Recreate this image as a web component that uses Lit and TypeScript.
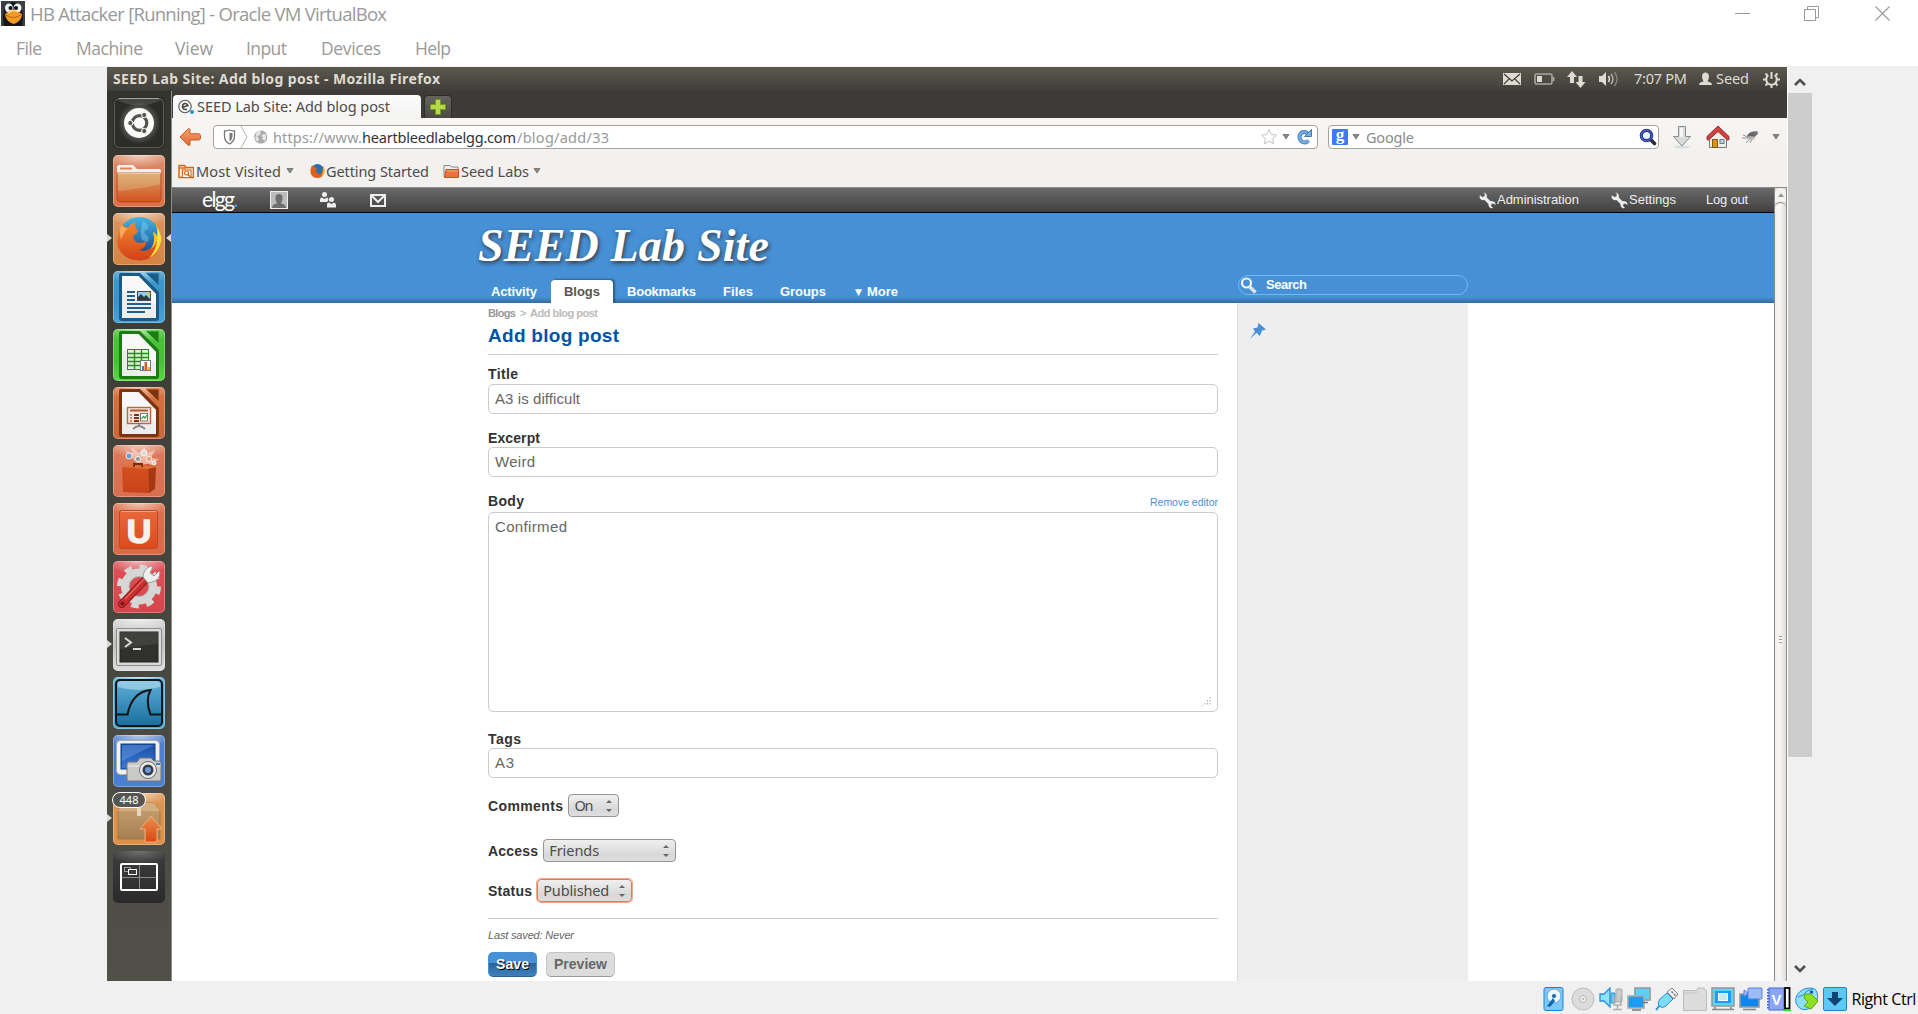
import { LitElement, html, svg, css } from "lit";
import { customElement, property } from "lit/decorators.js";

/** Text run whose tracking is computed so that it spans a given advance width. */
@customElement("fit-text")
class FitText extends LitElement {
  @property({ type: Number }) w = 0;
  static styles = css`
    :host { display: inline-block; justify-self: start; width: max-content; white-space: pre; }
  `;
  firstUpdated() {
    const n = (this.textContent || "").length;
    const natural = this.getBoundingClientRect().width;
    if (n > 1 && this.w) this.style.letterSpacing = ((this.w - natural) / (n - 1)).toFixed(3) + "px";
  }
  render() {
    return html`<slot></slot>`;
  }
}

const t = (text: string, w: number, cls = "") => html`<fit-text class=${cls} .w=${w}>${text}</fit-text>`;

const icon = (w: number, h: number, body: unknown) =>
  html`<svg width=${w} height=${h} viewBox="0 0 ${w} ${h}" fill="none">${body}</svg>`;

const grad = (id: string, a: string, b: string) => svg`
  <linearGradient id=${id} x1="0" y1="0" x2="0" y2="1"><stop offset="0" stop-color=${a}/><stop offset="1" stop-color=${b}/></linearGradient>`;

const tri = html`<svg class="tri" width="8" height="6" viewBox="0 0 8 6"><path d="M1 .5H7L4 5Z" fill="#8a8a88" stroke="#6a6a68" stroke-width=".8"/></svg>`;

/* ---------- launcher artwork, 52 x 52 ---------- */
const docPage = (dark: string, tile: string) => svg`
  <path d="M8 2H27L46 21V47Q46 50 43 50H9Q6 50 6 47V4Q6 2 8 2Z" fill=${dark}/>
  <path d="M33 2H46V15Z" fill=${dark} stroke=${tile}/>
  <path d="M9 5H25.500L43 23V47H9Z" fill="#ededed"/>
  <path d="M9 5H25.500L43 23V34L9 20Z" fill="#fff" opacity=".6"/>`;

const art: Record<string, unknown> = {
  dash: svg`
    <defs><radialGradient id="dg" cx=".5" cy=".5" r=".5"><stop offset=".55" stop-color="#fff" stop-opacity=".55"/><stop offset="1" stop-color="#fff" stop-opacity="0"/></radialGradient></defs>
    <rect x="1.500" y="1.500" width="49" height="49" rx="5" stroke="#6b6a65" opacity=".8"/>
    <path d="M6 1.500H46" stroke="#a8a7a2"/>
    <path d="M4 3Q26 14 48 3V2H4Z" fill="#fff" opacity=".12"/>
    <circle cx="26" cy="26" r="21" fill="url(#dg)" opacity=".5"/>
    <circle cx="26" cy="26" r="15" fill="#fbfbfb"/>
    <circle cx="26.500" cy="26" r="7.300" stroke="#55554f" stroke-width="3.200"/>
    <path d="M26.500 26L14 26M26.500 26L32 15.500M26.500 26L32 36.500" stroke="#fbfbfb" stroke-width="1.300"/>
    <g fill="#55554f" stroke="#fbfbfb" stroke-width="1"><circle cx="17.300" cy="26" r="2.600"/><circle cx="31.200" cy="18" r="2.600"/><circle cx="31.200" cy="34" r="2.600"/></g>`,
  files: svg`
    <defs>${grad("fg", "#d9a469", "#d3511f")}</defs>
    <path d="M4 12Q4 10 6 10H20L24 14H46Q48 14 48 16V24H4Z" fill="#f4efec"/>
    <path d="M7 12.500H19V14.500H7Z" fill="#e8834f"/>
    <path d="M4 18H48V44Q48 47 45 47H7Q4 47 4 44Z" fill="url(#fg)" stroke="#b5451b" stroke-width=".8"/>
    <path d="M5 19H47V29Q28 34 5 36Z" fill="#e9cfa0" opacity=".3"/>
    <path d="M4.500 18.500H47.500" stroke="#f3c49a"/>`,
  firefox: svg`
    <defs>${grad("ffb", "#43b5e3", "#123b86")}${grad("ffo", "#f5892c", "#d2401a")}</defs>
    <circle cx="26.500" cy="25" r="21" fill="url(#ffb)"/>
    <path d="M30 8q6 3 5 8q-5 1-3 5q5 2 3 8l-6-2q-3-8 1-19Z" fill="#7fd0ee" opacity=".45"/>
    <path d="M43 12Q50 22 47 32Q43 46 28 47.500Q11 48 5 34Q3 25 7 17L8 10Q11 14 15 15Q18 10 23 9Q20 13 25 17Q25 20 20 23Q21 29 26 30Q32 30 33 27Q34 35 26 37Q35 40 40 32Q43 25 40 19Q43 20 44 24Q45 17 43 12Z" fill="url(#ffo)"/>
    <path d="M43 12Q50 22 47 32Q44 41 36 45Q45 35 44 24Q45 17 43 12ZM46 18Q50 25 47 32Q49 24 46 18Z" fill="#f9e03a"/>
    <path d="M40 19Q43 28 38 36Q45 30 44 24Q43 20 40 19Z" fill="#fbc22c"/>
    <path d="M8 11Q10 16 15 15Q10 20 8 27Q6 19 8 11Z" fill="#fba858"/>`,
  writer: svg`${docPage("#1b5a86", "#3f98cb")}
    <path d="M14 21H22M14 25H22M14 29H22M14 33H38M14 37H38M14 41H32" stroke="#1f5f8c" stroke-width="2"/>
    <rect x="24.500" y="20.500" width="13" height="9" fill="#8fd0ee" stroke="#3f4b52"/>
    <path d="M25 29V26L28 23L31 26L33 24L37 28V29Z" fill="#303a40"/><circle cx="35.500" cy="22.500" r="1.500" fill="#f3c42e"/>`,
  calc: svg`${docPage("#1d7a14", "#4cc43a")}
    <rect x="14.500" y="20.500" width="21" height="20" fill="#dff3da" stroke="#2a8a20"/>
    <path d="M21.500 20V40M28.500 20V40M14 24.500H36M14 28.500H36M14 32.500H36M14 36.500H36" stroke="#2a8a20" stroke-width="1.400"/>
    <rect x="27.500" y="31.500" width="10" height="10" fill="#fff" stroke="#777"/>
    <path d="M29 41V37H31V41Z" fill="#3d7fc0"/><path d="M31.500 41V33H34V41Z" fill="#e2562a"/><path d="M34.500 41V38H37V41Z" fill="#f0b429"/>`,
  impress: svg`${docPage("#7c3310", "#d5733f")}
    <rect x="14.500" y="20.500" width="23" height="16" fill="#f6e8e0" stroke="#c0663c" stroke-width="1.400"/>
    <path d="M17 23.500H35" stroke="#b65a2e" stroke-width="2"/>
    <path d="M17 28H19M17 31H19M17 34H19" stroke="#d98b63" stroke-width="1.800"/><path d="M21 28H26M21 31H26M21 34H26" stroke="#7c3310" stroke-width="1.800"/>
    <rect x="27.500" y="26.500" width="7" height="7.500" fill="#fff" stroke="#777"/><path d="M28.500 32L30.500 29.500L32 31L34 28" stroke="#2b9b28" stroke-width="1.200"/>
    <path d="M26 37V39M20 42Q26 36 32 42" stroke="#888" stroke-width="1.800"/>`,
  center: svg`
    <defs>${grad("bg1", "#d5521f", "#c9431a")}</defs>
    <path d="M26 20L12 6L20 8L18 2L26 8L32 2L32 9L42 5L38 13L46 14L38 20Z" fill="#fff" opacity=".45"/>
    <g stroke="#fff" stroke-width=".8"><circle cx="16" cy="11" r="3" fill="#6c9bc7"/><circle cx="31" cy="8" r="3" fill="#ded9d5"/><circle cx="25" cy="14" r="2.600" fill="#8d9a9d"/><circle cx="36" cy="14" r="2.800" fill="#e9a080"/><circle cx="41" cy="18" r="2" fill="#c9d5da"/></g>
    <path d="M9 22L35 19L36 48L10 47Z" fill="url(#bg1)"/>
    <path d="M35 19L43 22L42 44L36 48Z" fill="#a8380f"/>
    <path d="M9 22L12 20L43 20.500V22L35 24Z" fill="#e0713a"/>
    <path d="M21 22V19H29V22" stroke="#7b2a0b" stroke-width="1.800"/>`,
  one: svg`
    <defs>${grad("og", "#e8673c", "#de4a1c")}</defs>
    <rect x="6.500" y="7.500" width="38" height="38" rx="2" fill="url(#og)" stroke="#b94a2a"/>
    <path d="M8 8.500H43" stroke="#f2a384"/>
    <text x="26" y="40" text-anchor="middle" class="u-one">U</text>`,
  settings: svg`
    <g transform="translate(26 25.500)"><circle r="14" stroke="#d6d6d4" stroke-width="8"/>
    <circle r="19.500" stroke="#d6d6d4" stroke-width="5" stroke-dasharray="7.650 7.660"/>
    <circle r="10" stroke="#b5b5b5" stroke-width="1"/></g>
    <path d="M9 43L33 18" stroke="#8f1b1b" stroke-width="8" stroke-linecap="round"/>
    <path d="M9 43L33 18" stroke="#c92f2f" stroke-width="6" stroke-linecap="round"/>
    <path d="M12 38L32 17" stroke="#e46a66" stroke-width="1.300"/>
    <circle cx="9.500" cy="42.500" r="2" fill="#7c1717"/>
    <path d="M30 16Q30 8 38 5L40 6L37 12L41 15L46 10L47 11Q47 19 39 21L35 22Z" fill="#eeeeec" stroke="#9a9a9a"/>`,
  terminal: svg`
    <rect x="3.500" y="9.500" width="45" height="37" rx="1.500" fill="#d9dbd8" stroke="#8b8d8a"/>
    <rect x="7" y="13" width="38" height="30" fill="#30302e" stroke="#222"/>
    <path d="M7 13H45V25Q24 27 7 30Z" fill="#5a5a58" opacity=".4"/>
    <path d="M12 19L18 23.500L12 28M20 30H28" stroke="#d8d8d6" stroke-width="2"/>`,
  shark: svg`
    <defs>${grad("sg", "#5fb0d6", "#186f9e")}</defs>
    <rect x="3" y="3" width="46" height="46" rx="4" fill="url(#sg)" stroke="#0f1416" stroke-width="2"/>
    <path d="M5 10Q4 4 8 4H44Q48 4 47 10Q26 16 5 10Z" fill="#d4f0fa" opacity=".45"/>
    <path d="M4 37.500H14.500Q19 15 37.500 13Q32 23 37.500 37.500H48" stroke="#0f1416" stroke-width="2"/>`,
  shot: svg`
    <defs>${grad("mg", "#1c4fa8", "#3a7bd5")}</defs>
    <rect x="3.500" y="5.500" width="43" height="34" rx="4" fill="#f1f1ef" stroke="#a9abad"/>
    <rect x="8" y="9" width="34" height="25" fill="url(#mg)" stroke="#0c3c86"/>
    <path d="M9 10H41L9 26Z" fill="#80b4f0" opacity=".35"/>
    <path d="M14 29Q14 27 16 27H24L27 23H38L41 26H46Q48 26 48 28V46H14Z" fill="#c9cac8" stroke="#777"/>
    <path d="M14.500 31H47.500" stroke="#eee"/>
    <circle cx="35" cy="35" r="8.500" fill="#e9e9e7" stroke="#6a6a6a"/><circle cx="35" cy="35" r="5.500" fill="#333b46"/><circle cx="35" cy="35" r="3" fill="#6d99d8"/>
    <rect x="43" y="28" width="4" height="2" fill="#3a7bd5"/>`,
  updater: svg`
    <defs>${grad("ug", "#c9a272", "#a57f52")}${grad("ua", "#e9914f", "#d9480f")}</defs>
    <path d="M5 18L11 10H41L47 18V46H5Z" fill="url(#ug)" stroke="#9a7547" stroke-width=".8"/>
    <path d="M5 18L11 10H41L47 18Z" fill="#d2ae80"/>
    <path d="M24 10H28V23H24Z" fill="#e7d6bf"/>
    <path d="M38 23L49 36H44V49H32V36H27Z" fill="url(#ua)" stroke="#f0b385"/>`,
  workspace: svg`
    <path d="M26.500 13V39M8 26.500H45" stroke="#8b8b8b"/>
    <rect x="8" y="13" width="36" height="26" rx="1" stroke="#fff" stroke-width="2"/>
    <rect x="11.500" y="16.500" width="6" height="4" stroke="#999"/><rect x="15.500" y="18.500" width="8" height="5" fill="#3a3a3a" stroke="#fff"/>`,
};

const launchers = ["dash", "files", "firefox", "writer", "calc", "impress", "center", "one", "settings", "terminal", "shark", "shot", "updater", "workspace"];
const running = ["firefox", "terminal", "updater"];

@customElement("unity-launcher")
class UnityLauncher extends LitElement {
  static styles = css`
    :host { display: flex; flex-direction: column; gap: 6px; width: 64px; box-sizing: border-box; padding: 6px 0 0 6px; background: linear-gradient(#34342f, #45453e 50%, #504f48); }
    .tile { position: relative; width: 52px; height: 52px; border-radius: 5px; box-shadow: inset 0 0 0 1px rgba(255,255,255,.28); }
    .tile::before { content: ""; position: absolute; inset: 0; border-radius: 5px; background: radial-gradient(ellipse 34px 13px at 50% 0, rgba(255,255,255,.6), rgba(255,255,255,0)); }
    .tile svg { display: block; position: relative; }
    .dash { background: #2c2c28; box-shadow: none; }
    .dash::before { display: none; }
    .files { background: linear-gradient(#db8a68, #dc7246); }
    .firefox { background: linear-gradient(#d9955f, #d58342); }
    .writer { background: linear-gradient(#3f98cb, #3a93c8 60%, #47a2d8); }
    .calc { background: linear-gradient(#4cc43a, #46c034 60%, #58d845); }
    .impress { background: linear-gradient(#d5733f, #c9673a); }
    .center { background: linear-gradient(#dd7a5b, #d86e4d); }
    .one { background: linear-gradient(#dc6f4a, #d86b45); }
    .settings { background: linear-gradient(#de5057, #d5474d); }
    .terminal { background: linear-gradient(#d4d4d4, #bdbdbd 50%, #dedede); }
    .shark { background: #49ade0; }
    .shot { background: linear-gradient(#4e80cc, #4a7fd2); }
    .updater { background: linear-gradient(#dc944f, #de9146); }
    .workspace { background: linear-gradient(#3c3c3c, #343434 50%, #2a2a2a); box-shadow: none; }
    .workspace::before { opacity: .45; }
    .u-one { font: bold 34px "Liberation Sans", sans-serif; fill: #f6f1ee; stroke: #f6f1ee; stroke-width: 1.500; }
    .run { position: absolute; left: -6px; top: 21px; width: 0; height: 0; border: 4.500px solid transparent; border-left: 5px solid #d8d8d6; border-right: 0; }
    .focus { position: absolute; right: -6px; top: 21px; width: 0; height: 0; border: 4.500px solid transparent; border-right: 5px solid #d8d8d6; border-left: 0; }
    .badge { position: absolute; left: -1px; top: -1px; width: 34px; height: 16px; box-sizing: border-box; border: 1.500px solid #fff; border-radius: 8px; background: #555; color: #fff; font: 11px/13px "Noto Sans", sans-serif; text-align: center; }
  `;
  render() {
    return launchers.map(
      (n) => html`<div class="tile ${n}">
        ${icon(52, 52, art[n])}
        ${running.includes(n) ? html`<i class="run"></i>` : ""}
        ${n === "firefox" ? html`<i class="focus"></i>` : ""}
        ${n === "updater" ? html`<b class="badge">448</b>` : ""}
      </div>`
    );
  }
}

/* ---------- small icons ---------- */
const wrench = icon(17, 17, svg`<path d="M4.500 .5L5.800 1.800L5.500 4.500L3 5L.8 3Q0 6 2 7.500Q3.500 8.500 5.500 8L9.500 12Q9 14.500 11 15.700Q12.500 16.700 14 15.700L12 14L12.500 12L14.500 11.600L16.300 13.300Q17 10.500 14.500 9.500Q13 8.800 11.500 9.300L7.800 5.600Q8.500 2.500 6.500 1.200Q5.500 .4 4.500 .5Z" fill="#eee"/>`);
const firefoxSmall = icon(16, 16, svg`<circle cx="7.500" cy="7.500" r="6.500" fill="#2a6fb4"/><path d="M13 3Q15.500 7 14 11Q12 15 7.500 15Q2 15 .5 10Q0 6 2 2Q3 4 5 4L7 6.500L5.500 8Q6 10.500 9 10Q9 12 7 12Q12 12 12.500 7Z" fill="#e3601c"/><path d="M13 3Q15.500 7 14 11Q13 13 11 14Q14 10 13 3Z" fill="#f7c531"/>`);
const folderSmall = icon(16, 16, svg`<path d="M1 2.500H7L8.500 4H15V14H1Z" fill="#eee" stroke="#888"/><path d="M1.500 14.500L3 6.500H15.500V14.500Z" fill="#e5753a" stroke="#c65216"/><path d="M4 8H15" stroke="#f1aa80"/>`);
const mostIcon = icon(16, 16, svg`<path d="M1 2.500H6.500L8 4.500H15.500V14.500H1Z" fill="#fbe3cd" stroke="#d8640f" stroke-width="1.400"/><path d="M1 5H8" stroke="#d8640f" stroke-width="1.400"/><rect x="4.500" y="7" width="8.500" height="7.500" fill="#fff" stroke="#d8640f"/><circle cx="8.500" cy="10" r="2" stroke="#d8640f" stroke-width="1.200"/><path d="M10 11.500L12.500 14" stroke="#d8640f" stroke-width="1.400"/>`);

/* ---------- Firefox chrome ---------- */
@customElement("browser-chrome")
class BrowserChrome extends LitElement {
  static styles = css`
    :host { display: block; font: 14.500px "Noto Sans", sans-serif; color: #4c4c4c; }
    svg { display: block; }
    fit-text { line-height: 20px; }
    .tabs { display: flex; align-items: flex-end; gap: 3px; height: 27px; padding-left: 1px; background: #3c3b37; box-sizing: border-box; }
    .tab { display: grid; grid-template-columns: 19px 1fr; align-items: center; width: 248px; height: 23px; padding-left: 5px; box-sizing: border-box; border-radius: 4px 4px 0 0; background: linear-gradient(#fbfbfb, #f5f4f3); }
    .tab fit-text { margin-top: -2px; }
    .plus { display: grid; place-items: center; width: 28px; height: 23px; border-radius: 4px 4px 0 0; background: linear-gradient(#64635d, #4b4a45); border: 1px solid #2e2d2a; border-bottom: 0; box-sizing: border-box; }
    .nav { display: grid; grid-template-columns: 34px 1105px 10px 331px 13px 34px 35px 31px 1fr; align-items: center; height: 38px; padding-left: 7px; box-sizing: border-box; background: linear-gradient(#f7f6f5, #f2f1f0); }
    .field { display: grid; align-items: center; height: 24px; border: 1px solid #a5a29d; border-radius: 4px; background: #fff; box-sizing: border-box; }
    .url { grid-template-columns: 18px 14px 19px 89px 155px 743px 22px 14px 1fr; padding-left: 8px; color: #9a9a9a; }
    .url .host { color: #333; }
    .find { grid-template-columns: 20px 14px 273px 1fr; padding-left: 3px; color: #8a8a8a; }
    .marks { display: grid; grid-template-columns: 18px 90px 24px 16px 117px 18px 72px 1fr; align-items: center; height: 32px; padding: 0 0 2px 6px; background: #f2f1ef; border-bottom: 1px solid #8d8b87; box-sizing: border-box; }
    .g { font: bold 17px "Liberation Serif", serif; fill: #fff; }
  `;
  render() {
    return html`
      <div class="tabs">
        <div class="tab">
          ${icon(16, 16, svg`<circle cx="7" cy="7.500" r="6.200" stroke="#555" stroke-width="1.100"/><path d="M4 8.500L10 6.500Q9 4 6.500 4.500Q4 5.500 4.500 8.500Q5.500 11 9 10.500" stroke="#444" stroke-width="1.500"/><circle cx="14" cy="13" r="2" fill="#1b98c9"/>`)}
          ${t("SEED Lab Site: Add blog post", 193)}
        </div>
        <div class="plus">${icon(16, 16, svg`<path d="M5.500 .5H10.500V5.500H15.500V10.500H10.500V15.500H5.500V10.500H.5V5.500H5.500Z" fill="#b5d84e" stroke="#6f9a1c"/>`)}</div>
      </div>
      <div class="nav">
        ${icon(23, 20, svg`<defs>${grad("ba", "#f7a271", "#e0682f")}</defs><path d="M9.500 1.500Q11 1.500 11 3V6.800H19.500Q21.500 6.800 21.500 8.800V11Q21.500 13 19.500 13H11V17Q11 19 9.500 18.500L1 10Z" fill="url(#ba)" stroke="#c95a25"/>`)}
        <div class="field url">
          ${icon(16, 18, svg`<path d="M7.500 2Q10 3 12.500 3V8Q12.500 13.500 7.500 16Q2.500 13.500 2.500 8V3Q5 3 7.500 2Z" stroke="#777" stroke-width="1.300"/><path d="M7.500 4.500Q9 5 10.500 5V8.500Q10 12 7.500 13.500Z" fill="#777"/>`)}
          ${icon(8, 22, svg`<path d="M1 0L7 11L1 22" stroke="#b8b6b2"/>`)}
          ${icon(14, 16, svg`<circle cx="6.800" cy="8" r="6.600" fill="#a9a9a9"/><path d="M2.500 3Q5 1 7 3L6 6L3 7L5 10L4 13Q0 10 2 6ZM9 5L12 5Q13 9 11 12L8 10L9 8L7 7Z" fill="#e4e4e4"/>`)}
          ${t("https://www.", 89)}${t("heartbleedlabelgg.com", 154, "host")}${t("/blog/add/33", 92)}
          ${icon(18, 18, svg`<path d="M9 1.500L11.300 6.500L16.500 7.100L12.600 10.700L13.700 16L9 13.300L4.300 16L5.400 10.700L1.500 7.100L6.700 6.500Z" stroke="#c4c4c4" fill="#fff"/>`)}
          ${tri}
          ${icon(17, 18, svg`<path d="M12.500 12.500Q10 15.500 6.500 14Q3 12 3.500 8Q5 3.500 9 4Q11 4.500 12 6" stroke="#4a85bd" stroke-width="4"/><path d="M12.500 12.500Q10 15.500 6.500 14Q3 12 3.500 8Q5 3.500 9 4Q11 4.500 12 6" stroke="#79aede" stroke-width="2"/><path d="M15.500 1.500V8.500H8.500Z" fill="#79aede" stroke="#3f7ab3"/>`)}
        </div>
        <span></span>
        <div class="field find">
          ${icon(16, 16, svg`<rect width="16" height="16" rx="1" fill="#4079f5"/><text x="8" y="11" text-anchor="middle" class="g">g</text>`)}
          ${tri}<span>${t("Google", 48)}</span>
          ${icon(18, 18, svg`<path d="M11.500 11.500L15.500 15.500" stroke="#2c2c34" stroke-width="3.600" stroke-linecap="round"/><circle cx="7.500" cy="7.500" r="5.200" fill="#eaf1fb" stroke="#25358a" stroke-width="3.200"/><circle cx="7.500" cy="7.500" r="5.300" stroke="#5a70c8" stroke-width="1"/>`)}
        </div>
        <span></span>
        ${icon(20, 24, svg`<ellipse cx="10" cy="22" rx="8" ry="1.500" fill="#ddd"/><path d="M6.500 1.500H13.500V11.500H18.500L10 21L1.500 11.500H6.500Z" fill="#d9dcdd" stroke="#8b8e8c"/><path d="M8 3H11V12H8Z" fill="#f6f7f7"/>`)}
        ${icon(24, 24, svg`<path d="M3.500 11V22.500H20.500V11L12 3.500Z" fill="#efefe9" stroke="#777"/><rect x="6.500" y="14.500" width="5" height="8" fill="#d8921f" stroke="#8a5a0b"/><rect x="14" y="14.500" width="4" height="4" fill="#b9d9ee" stroke="#6a7d89"/><path d="M12 1L23 11.500V14.500L21.500 15L12 6.500L2.500 15L1 14.500V11.500Z" fill="#cf4340" stroke="#a02a2a"/>`)}
        ${icon(18, 16, svg`<path d="M2 6L7 8M1 9L7 9M5 14L9 10M9 14L11 10" stroke="#888" stroke-width=".9"/><ellipse cx="11" cy="6" rx="5" ry="3" transform="rotate(-25 11 6)" fill="#666"/><ellipse cx="10" cy="9" rx="4" ry="2" fill="#bbb" opacity=".8"/><circle cx="15" cy="4" r="2" fill="#777"/>`)}
        ${tri}
      </div>
      <div class="marks">
        ${mostIcon}${t("Most Visited", 85)}${tri}${firefoxSmall}${t("Getting Started", 103)}${folderSmall}${t("Seed Labs", 68)}${tri}
      </div>
    `;
  }
}

/* ---------- the page ---------- */
@customElement("elgg-page")
class ElggPage extends LitElement {
  static styles = css`
    :host { display: flex; flex-direction: column; background: #fff; font: 13px "Liberation Sans", sans-serif; overflow: hidden; }
    svg { display: block; }
    .top { display: grid; grid-template-columns: 68px 50px 50px 1109px 18px 114px 18px 77px 1fr; align-items: center; flex: none; height: 25px; padding-left: 30px; box-sizing: border-box; background: linear-gradient(#6a6a6a, #404040); border-bottom: 1px solid #000; color: #eee; }
    .top fit-text { margin-top: -2px; }
    .elgg { font: 21px/22px Lato, sans-serif; color: #fff; display: flex; }
    .elgg .dot { color: #2aa3dc; margin-top: -2px; }
    .head { flex: none; height: 90px; padding-left: 306px; background: linear-gradient(#4690d6 84px, #3a78b4 88px, #33689e); box-sizing: border-box; color: #fff; }
    h1 { margin: 0; height: 62px; font: italic bold 46px/66px "Liberation Serif", serif; text-shadow: 1px 2px 4px #333; }
    .nav { display: grid; grid-template-columns: 73px 62px 14px 96px 57px 75px 12px 371px 230px; align-items: end; height: 28px; font-weight: bold; }
    .nav > fit-text { line-height: 22px; }
    .nav > .first { margin-left: 13px; }
    .sel { width: 62px; height: 23px; box-sizing: border-box; padding-left: 13px; line-height: 24px; background: #fff; color: #555; border-radius: 4px 4px 0 0; box-shadow: 2px -1px 2px rgba(0,0,0,.35); clip-path: inset(-4px -4px 0 -4px); }
    .search { align-self: start; display: grid; grid-template-columns: 25px 1fr; align-items: center; height: 20px; box-sizing: border-box; border: 1px solid #71b9f7; border-radius: 10px; padding-left: 2px; }
    .search fit-text { margin-top: -2px; }
    .arrow { font: 9px/21px "DejaVu Sans", sans-serif; }
    .main { display: grid; grid-template-columns: 730px 231px; column-gap: 19px; padding-left: 316px; flex: 1; min-height: 0; }
    aside { background: #eee; border-left: 1px solid #dcdcdc; box-sizing: border-box; padding: 20px 0 0 12px; }
    .crumb { display: grid; grid-template-columns: 32px 10px 1fr; height: 20px; line-height: 20px; font-size: 11px; font-weight: bold; color: #bbb; }
    .crumb .on { color: #999; }
    h2 { margin: 0 0 10px; height: 32px; box-sizing: border-box; border-bottom: 1px solid #ccc; font: bold 19px/25px "Liberation Sans", sans-serif; color: #0054a7; }
    .label { display: flex; justify-content: space-between; height: 19px; line-height: 19px; font-size: 14px; font-weight: bold; color: #333; }
    .low { line-height: 21px; }
    .tall { height: 20px; }
    .remove { font-size: 10.500px; font-weight: normal; color: #4690d6; line-height: 21px; }
    .box { height: 30px; box-sizing: border-box; border: 1px solid #ccc; border-radius: 5px; padding-left: 6px; font-size: 15px; line-height: 28px; color: #666; }
    .gap14 { margin-bottom: 14px; }
    .gap15 { margin-bottom: 15px; }
    .gap16 { margin-bottom: 16px; }
    .area { height: 200px; display: flex; justify-content: space-between; margin-bottom: 17px; }
    .area svg { align-self: flex-end; margin: 0 6px 5px 0; }
    .line { display: flex; align-items: center; gap: 5px; height: 23px; font-size: 14px; font-weight: bold; color: #333; }
    .select { display: flex; justify-content: space-between; align-items: center; height: 23px; box-sizing: border-box; border: 1px solid #979591; border-radius: 4px; padding: 0 5px; font: 14.500px/20px "Noto Sans", sans-serif; color: #4c4c4c; background: linear-gradient(#f0f0f0, #d8d8d8 70%, #dedede); }
    .select fit-text { margin-top: -1px; }
    .w51 { width: 51px; } .w133 { width: 133px; } .w95 { width: 95px; }
    .focus { border-color: #df7b59; box-shadow: 0 0 0 1px #f2a88c; }
    .c1 { margin-bottom: 22px; } .c2 { margin-bottom: 17px; }
    .foot { margin-top: 16px; border-top: 1px solid #ccc; }
    .saved { height: 33px; line-height: 33px; font-size: 11px; font-style: italic; color: #666; }
    .btns { display: flex; gap: 9px; }
    .btn { height: 25px; box-sizing: border-box; border-radius: 5px; text-align: center; font: bold 14px/23px "Liberation Sans", sans-serif; }
    .save { width: 49px; color: #fff; border: 1px solid #4690d6; border-bottom-color: #2d5f92; background: linear-gradient(#4690d6 10px, #2f6396 10px, #3d80bf); text-shadow: 1px 1px 0 #000; }
    .preview { width: 69px; color: #666; border: 1px solid #c4c4c4; border-bottom-color: #999; background: #dcdcdc; }
  `;
  render() {
    const spin = html`<svg width="8" height="14" viewBox="0 0 8 14"><path d="M1 4L4 1L7 4ZM1 10L4 13L7 10Z" fill="#666"/></svg>`;
    const envelope = icon(16, 13, svg`<rect x="1" y="1" width="14" height="11" stroke="#eee" stroke-width="2"/><path d="M2 2L8 8L14 2" stroke="#eee" stroke-width="2"/>`);
    return html`
      <div class="top">
        <span class="elgg">${t("elgg", 33)}<span class="dot">.</span></span>
        ${icon(18, 18, svg`<rect x=".5" y=".5" width="17" height="17" fill="#bcbcbc" stroke="#eee"/><path d="M2 17Q2 13 7 12.500Q5 9 5.500 6Q6 3 9 3Q12 3 12.500 6Q13 9 11 12.500Q16 13 16 17Z" fill="#6e6e6e"/>`)}
        ${icon(16, 16, svg`<g fill="#eee"><circle cx="4.500" cy="2.500" r="2.500"/><path d="M0 10V7.500Q0 5.500 2 5.500L4.500 7L7 5.500Q8.500 6 8.500 8L7 10Z"/><circle cx="11.500" cy="7.500" r="2.500"/><path d="M7 15.500V12.500Q7 10.500 9 10.500L11.500 12L14 10.500Q16 11 16 13V15.500Z"/></g>`)}
        ${envelope}
        ${wrench}${t("Administration", 82)}${wrench}${t("Settings", 47)}${t("Log out", 42)}
      </div>
      <div class="head">
        <h1>${t("SEED Lab Site", 291)}</h1>
        <div class="nav">
          ${t("Activity", 46, "first")}
          <div class="sel">${t("Blogs", 36)}</div><span></span>
          ${t("Bookmarks", 69)}${t("Files", 30)}${t("Groups", 46)}
          <span class="arrow">▼</span>${t("More", 31)}
          <div class="search">
            ${icon(17, 17, svg`<circle cx="5.500" cy="6" r="4.500" stroke="#f4f4f4" stroke-width="2.200"/><path d="M8.500 9.500L14.500 15.500" stroke="#e2e2e2" stroke-width="3.600"/>`)}
            ${t("Search", 41)}
          </div>
        </div>
      </div>
      <div class="main">
        <section>
          <div class="crumb">${t("Blogs", 28, "on")}<span>&gt;</span>${t("Add blog post", 68)}</div>
          <h2>${t("Add blog post", 131)}</h2>
          <div class="label">${t("Title", 30)}</div>
          <div class="box gap14">${t("A3 is difficult", 85)}</div>
          <div class="label low">${t("Excerpt", 52)}</div>
          <div class="box gap15">${t("Weird", 40)}</div>
          <div class="label tall">${t("Body", 36)}<span class="remove">${t("Remove editor", 68)}</span></div>
          <div class="box area">${t("Confirmed", 72)}
            ${icon(10, 10, svg`<path d="M9 1V10M6.500 4V10M4 7V10M1 9V10" stroke="#aaa" stroke-dasharray="1.500 1.500"/>`)}
          </div>
          <div class="label low">${t("Tags", 33)}</div>
          <div class="box gap16">${t("A3", 19)}</div>
          <div class="line c1">${t("Comments", 75)}<div class="select w51">${t("On", 19)}${spin}</div></div>
          <div class="line c2">${t("Access", 50)}<div class="select w133">${t("Friends", 50)}${spin}</div></div>
          <div class="line">${t("Status", 44)}<div class="select w95 focus">${t("Published", 66)}${spin}</div></div>
          <div class="foot">
            <div class="saved">${t("Last saved: Never", 86)}</div>
            <div class="btns"><div class="btn save">${t("Save", 33)}</div><div class="btn preview">${t("Preview", 53)}</div></div>
          </div>
        </section>
        <aside>${icon(16, 16, svg`<path d="M8.500 0L16 6.500L14 7L12 7.500L9.800 13L6.500 9.800L0 16L5 8.500L3 5.500L7.500 4.500Z" fill="#4690d6"/>`)}</aside>
      </div>
    `;
  }
}

const trayIcons = [
  svg`<rect x="1" y=".5" width="19" height="23" rx="2" fill="#7cc8fa" stroke="#1f83c9"/><circle cx="11" cy="9" r="7" fill="#eaf7ff" stroke="#5aa9e0"/><circle cx="11" cy="9" r="2" fill="#1467a8"/><path d="M4 19L10 11L12 14L7 20Z" fill="#1467a8"/>`,
  svg`<circle cx="12" cy="12" r="11" fill="#dcdcdc" stroke="#bdbdbd"/><circle cx="12" cy="12" r="3.500" fill="#eee" stroke="#b5b5b5"/><circle cx="12" cy="12" r="1" fill="#aaa"/>`,
  svg`<path d="M1 7H5L11 1V20L5 14H1Z" fill="#8fe0fa" stroke="#2c8fd6" stroke-width="1.300"/><path d="M12 6H16V16H12Z" fill="#66c8f4" stroke="#2c8fd6"/><rect x="17" y="2" width="6" height="13" rx="1" fill="#ccc" stroke="#aaa"/><path d="M15 10V18H22V10M18.500 18V22M14 22.500H23" stroke="#b0b0b0" stroke-width="1.600"/>`,
  svg`<rect x="8" y="1" width="15" height="12" fill="#5ad0fb" stroke="#999" stroke-width="1.600"/><rect x="1" y="9" width="16" height="12" fill="#1c9cf2" stroke="#aaa" stroke-width="1.600"/><path d="M5 23H14M16 15.500H21" stroke="#777" stroke-width="1.500"/>`,
  svg`<path d="M1 23L5 18" stroke="#2c8fd6" stroke-width="2"/><path d="M4 19Q2 16 5 12L12 6L18 12L11 19Q7 22 4 19Z" fill="#7fdcf8" stroke="#2c8fd6"/><path d="M12 5L17 1L23 7L19 12Z" fill="#eee" stroke="#888"/><path d="M16.500 4.500L18 6M19 7L20.500 8.500" stroke="#777" stroke-width="1.600"/>`,
  svg`<path d="M.5 3.500H13L15 1H21L23.500 4V23.500H.5Z" fill="#dcdcdc" stroke="#bbb"/><path d="M.5 6H13L15 4" stroke="#c4c4c4"/>`,
  svg`<rect x="1" y="1" width="22" height="18" fill="#5cd3fb" stroke="#999" stroke-width="1.600"/><rect x="4" y="4" width="16" height="12" fill="#1c9cf2"/><rect x="7.500" y="6.500" width="9" height="7" fill="#bdeeff" stroke="#fff"/><path d="M1 22.500H23M4 20V22M20 20V22" stroke="#888" stroke-width="1.600"/>`,
  svg`<rect x="1" y="7" width="19" height="13" fill="#0d86ee" stroke="#999" stroke-width="1.600"/><path d="M4 22.500H17" stroke="#888" stroke-width="1.600"/><rect x="9" y="1" width="14" height="11" rx="1" fill="#9cbcf8" stroke="#5b7fe0"/><path d="M9 6L5 3V10Z" fill="#9cbcf8" stroke="#5b7fe0"/>`,
  svg`<rect x="2" y="1" width="15" height="22" fill="#8da6f2" stroke="#4a66cf"/><path d="M1 2V23M18 2V23" stroke="#4a66cf" stroke-width="2" stroke-dasharray="1.500 1.500"/><text x="9.500" y="18" text-anchor="middle" class="v">V</text><rect x="18" y="1" width="4.500" height="20.500" fill="#fff" stroke="#000" stroke-width="1.800"/><path d="M17 23.500H24" stroke="#1bea1b" stroke-width="1.500"/>`,
  svg`<path d="M1 16Q-1 7 9 2Q20 -1 22 5Q25 15 16 21Q5 26 1 16Z" fill="#8fdcfb" stroke="#2c8fd6"/><path d="M3 10Q9 9 12 4M12 4L18 2" stroke="#2c8fd6"/><circle cx="16.500" cy="5" r="1.600" fill="#114a80"/><path d="M10 7H16L23 14L16 22L9 19L13 15L9 11Z" fill="#8fe01f" stroke="#57a80f"/>`,
  svg`<rect x=".5" y=".5" width="23" height="23" rx="1.500" fill="#5cc8f8" stroke="#1f83c9"/><path d="M9 5H15V11H20L12 19L4 11H9Z" fill="#0f4473"/>`,
];

@customElement("app-root")
class AppRoot extends LitElement {
  static styles = css`
    :host { display: flex; flex-direction: column; width: 1918px; height: 1014px; overflow: hidden; background: #f0f0f0; font-family: "Open Sans", sans-serif; color: #999; }
    svg { display: block; }
    .win { height: 66px; background: #fff; flex: none; }
    .title { display: grid; grid-template-columns: 29px 1705px 69px 71px 1fr; height: 28px; padding-left: 1px; font-size: 18.500px; line-height: 28px; }
    .title > svg { margin-top: 1px; }
    .ctl svg { margin-top: 6px; }
    .menu { display: grid; grid-template-columns: 60px 99px 71px 75px 94px 1fr; padding: 6px 0 0 16px; font-size: 17.500px; line-height: 28px; }
    .stage { display: grid; grid-template-columns: 1680px 1px 24px; margin: 1px 0 0 107px; height: 914px; flex: none; }
    .guest { display: flex; flex-direction: column; height: 914px; min-height: 0; background: #fff; }
    .panel { display: grid; grid-template-columns: 1390px 31px 33px 32px 35px 65px 17px 47px 1fr; align-items: center; height: 24px; flex: none; padding-left: 6px; box-sizing: border-box; background: linear-gradient(#5b584e, #3f3e39); color: #dfdbd2; font: 14.500px/22px "Noto Sans", sans-serif; }
    .panel fit-text { margin-top: -2px; }
    .panel .t { font-weight: bold; font-size: 14px; margin-top: 0; }
    .desk { display: grid; grid-template-columns: 64px 1px 1615px; flex: 1; min-height: 0; }
    .edge { background: #8f8d88; }
    .browser { display: flex; flex-direction: column; min-height: 0; }
    .view { display: grid; grid-template-columns: 1602px 13px; flex: 1; min-height: 0; }
    .sb { display: grid; grid-template-rows: 14px 1fr; border-left: 1px solid #8d8b87; border-right: 1px solid #8d8b87; box-sizing: border-box; background: #dedcd9; min-height: 0; }
    .sb .up { display: grid; place-items: center; border-radius: 6px 6px 0 0; background: #f4f3f1; }
    .sb .thumb { display: grid; grid-template-rows: 440px; justify-items: center; border-top: 1px solid #8d8b87; border-radius: 6px 6px 0 0; background: linear-gradient(90deg, #efeeec, #f9f8f7 40%, #deddda); }
    .grip { width: 3px; height: 7px; background: repeating-linear-gradient(#999 0 1px, #fff 1px 3px); align-self: end; }
    .gapw { background: #fff; }
    .vm { display: grid; grid-template-rows: 26px 664px 1fr; justify-items: center; }
    .vm svg { margin-top: 10px; }
    .vm .bar { width: 24px; background: #cdcdcd; }
    .vm .dn { align-self: end; margin-bottom: 7px; }
    .tray { display: flex; gap: 4px; align-items: center; justify-content: flex-end; height: 33px; flex: none; padding: 2px 2px 0 0; box-sizing: border-box; color: #000; font-size: 16px; line-height: 28px; }
    .v { font: bold 15px "Liberation Sans", sans-serif; fill: #fff; }
  `;
  render() {
    const s = "#dfdbd2";
    return html`
      <div class="win">
        <div class="title">
          ${icon(24, 25, svg`<rect width="24" height="25" fill="#3a3f46"/><path d="M3 25Q0 10 6 4Q12 -2 18 4Q24 10 21 25Z" fill="#14161a"/><ellipse cx="8" cy="7" rx="4" ry="4.500" fill="#f2f2f2"/><ellipse cx="16.500" cy="7" rx="4" ry="4.500" fill="#f2f2f2"/><circle cx="9.500" cy="7" r="2" fill="#111"/><circle cx="15" cy="7" r="2" fill="#111"/><path d="M4 13Q12 6 21 13Q21 20 13 23Q5 21 4 13Z" fill="#f39a26"/><path d="M5 14Q12 19 20 14" stroke="#b85f0c"/><path d="M7 12Q12 8 17 11" stroke="#fdd27a" stroke-width="1.500"/>`)}
          ${t("HB Attacker [Running] - Oracle VM VirtualBox", 357)}
          <span class="ctl">${icon(16, 16, svg`<path d="M0 7.500H15" stroke="#999"/>`)}</span>
          <span class="ctl">${icon(16, 16, svg`<path d="M.5 3.500H11.500V14.500H.5ZM3.500 3V.5H14.500V11.500H12" stroke="#999"/>`)}</span>
          <span class="ctl">${icon(16, 16, svg`<path d="M.5 .5L14.500 14.500M14.500 .5L.5 14.500" stroke="#999" stroke-width="1.100"/>`)}</span>
        </div>
        <div class="menu">
          ${t("File", 26)}${t("Machine", 67)}${t("View", 38)}${t("Input", 41)}${t("Devices", 60)}${t("Help", 36)}
        </div>
      </div>
      <div class="stage">
        <div class="guest">
          <div class="panel">
            ${t("SEED Lab Site: Add blog post - Mozilla Firefox", 327, "t")}
            ${icon(18, 12, svg`<rect width="18" height="12" fill=${s}/><path d="M1 1L9 8L17 1M1 11L6 6M17 11L12 6" stroke="#45433c" stroke-width="1.200"/>`)}
            ${icon(21, 12, svg`<rect x="1" y="1" width="17" height="10" rx="1.500" stroke="#a9a69d" stroke-width="1.600"/><rect x="3" y="3" width="5" height="6" fill=${s}/><path d="M19.500 4V8" stroke="#a9a69d" stroke-width="2"/>`)}
            ${icon(19, 17, svg`<path d="M5 0L10 6H7V12H3V6H0ZM13.500 17L8.500 11H11.500V5H15.500V11H18.500Z" fill=${s}/>`)}
            ${icon(21, 16, svg`<path d="M0 5H3L7 1V15L3 11H0Z" fill=${s}/><path d="M9.500 5Q11.500 8 9.500 11" stroke=${s} stroke-width="1.500"/><path d="M12 3Q16 8 12 13" stroke="#b5b2a8" stroke-width="1.400"/><path d="M15.500 1Q20.500 8 15.500 15" stroke="#8a877d" stroke-width="1.300"/>`)}
            ${t("7:07 PM", 53)}
            ${icon(13, 14, svg`<path d="M0 13Q0 10 4.500 9.500Q3 7 3 4Q3.500 .5 6.500 .5Q9.500 .5 10 4Q10 7 8.500 9.500Q13 10 13 13Z" fill=${s}/>`)}
            ${t("Seed", 33)}
            ${icon(17, 17, svg`<path d="M5 4.500A5.300 5.300 0 1 0 12 4.500" stroke=${s} stroke-width="2"/><path d="M8.500 1V8M0 8.500H3.500M13.500 8.500H17M8.500 14V17M2.500 2.500L5 5M14.500 2.500L12 5M2.500 14.500L5 12M14.500 14.500L12 12" stroke=${s} stroke-width="2"/>`)}
          </div>
          <div class="desk">
            <unity-launcher></unity-launcher>
            <div class="edge"></div>
            <div class="browser">
              <browser-chrome></browser-chrome>
              <div class="view">
                <elgg-page></elgg-page>
                <div class="sb">
                  <div class="up">${icon(6, 4, svg`<path d="M0 4L3 0L6 4Z" fill="#999"/>`)}</div>
                  <div class="thumb"><i class="grip"></i></div>
                </div>
              </div>
            </div>
          </div>
        </div>
        <div class="gapw"></div>
        <div class="vm">
          ${icon(12, 10, svg`<path d="M1 8L6 3L11 8" stroke="#505050" stroke-width="2.600"/>`)}
          <div class="bar"></div>
          <span class="dn">${icon(12, 10, svg`<path d="M1 2L6 7L11 2" stroke="#505050" stroke-width="2.600"/>`)}</span>
        </div>
      </div>
      <div class="tray">
        ${trayIcons.map((b) => icon(24, 24, b))}
        ${t("Right Ctrl", 65)}
      </div>
    `;
  }
}
